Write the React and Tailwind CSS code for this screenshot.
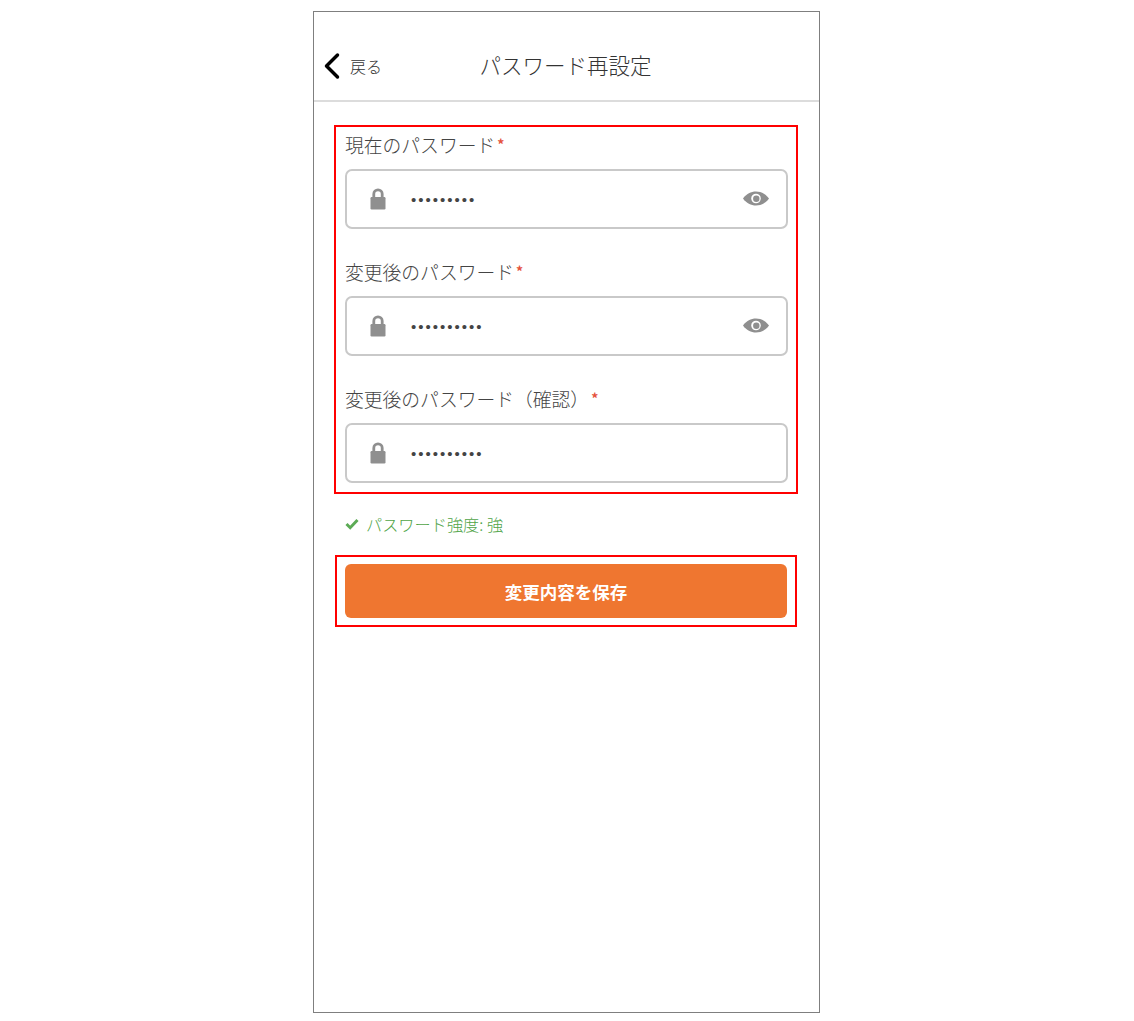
import { ChevronLeft } from 'lucide-react';

function LockIcon() {
  return (
    <svg width="16" height="22" viewBox="0 0 16 22" className="shrink-0">
      <path d="M3.800 11V6a4.200 4.200 0 0 1 8.400 0V11" fill="none" stroke="#8f8f8f" strokeWidth="2.800" />
      <rect x="0.500" y="9" width="15" height="12.500" rx="1.200" fill="#8f8f8f" />
    </svg>
  );
}

function EyeIcon() {
  return (
    <svg width="26" height="15" viewBox="0 0 26 15" className="-translate-y-[1px]">
      <path d="M0 7.500C3.400 2.800 7.900 0.500 13 0.500S22.600 2.800 26 7.500c-3.400 4.700-7.900 7-13 7S3.400 12.200 0 7.500z" fill="#8f8f8f" />
      <circle cx="13" cy="7.500" r="4.800" fill="#fff" />
      <circle cx="13.300" cy="7.800" r="3.200" fill="#8f8f8f" />
    </svg>
  );
}

function PasswordField({ label, dots, showEye, className = '' }) {
  return (
    <div className={className}>
      <div className="flex h-[22px] items-center text-[18.800px] font-light leading-[22px] text-[#444]">
        <span className="-translate-y-[1px] whitespace-nowrap">{label}</span>
        <span className="ml-[2px] -translate-y-[2px] text-[14px] font-bold leading-none text-[#e5533d]">*</span>
      </div>
      <div className="mt-[12px] flex h-[60px] items-center rounded-[7px] border-2 border-[#c9c9c9] bg-white pl-[23px] pr-[17px]">
        <LockIcon />
        <span className="ml-[25px] flex-1 font-['Liberation_Sans',sans-serif] text-[15px] leading-none tracking-[2px] text-[#444]">{dots}</span>
        {showEye && <EyeIcon />}
      </div>
    </div>
  );
}

export default function App() {
  return (
    <div className="min-h-[1021px] bg-white pt-[11px] font-['Noto_Sans_CJK_JP','Noto_Sans',sans-serif]">
      <div className="ml-[313px] flex h-[1002px] w-[507px] flex-col border border-[#7f7f7f] bg-white">
        <header className="relative flex h-[90px] items-center border-b-2 border-[#dcdcdc] pt-[20px]">
          <ChevronLeft className="-ml-[4px] h-[44px] w-[44px] shrink-0 text-black" strokeWidth={1.900} />
          <span className="-ml-[4px] text-[16px] font-light leading-[20px] text-[#333]">戻る</span>
          <h1 className="absolute inset-x-0 bottom-[20px] -translate-x-[1px] text-center text-[21.500px] font-light leading-[30px] text-[#333]">パスワード再設定</h1>
        </header>

        <main className="flex flex-col pl-[20px] pr-[21px] pt-[23px]">
          <section className="flex flex-col border-2 border-[#f00] pb-[9px] pl-[9px] pr-[8px] pt-[8px]">
            <PasswordField label="現在のパスワード" dots="•••••••••" showEye />
            <PasswordField label="変更後のパスワード" dots="••••••••••" showEye className="mt-[33px]" />
            <PasswordField label="変更後のパスワード（確認）" dots="••••••••••" className="mt-[33px]" />
          </section>

          <div className="ml-[11px] mt-[18px] flex h-[24px] items-center text-[16.200px] font-light leading-[24px] text-[#4fa447]">
            <svg width="14" height="12" viewBox="0 0 14 12" className="mr-[7px]">
              <path d="M1.500 6l3.700 3.700L12.500 2" fill="none" stroke="#5cab55" strokeWidth="3" />
            </svg>
            <span>パスワード強度: 強</span>
          </div>

          <div className="mx-[1px] mt-[19px] border-2 border-[#f00] px-[8px] py-[7px]">
            <button className="flex h-[54px] w-full items-center justify-center rounded-[6px] bg-[#ef7630] pt-[2px] text-[17.500px] font-bold text-white">
              変更内容を保存
            </button>
          </div>
        </main>
      </div>
    </div>
  );
}
